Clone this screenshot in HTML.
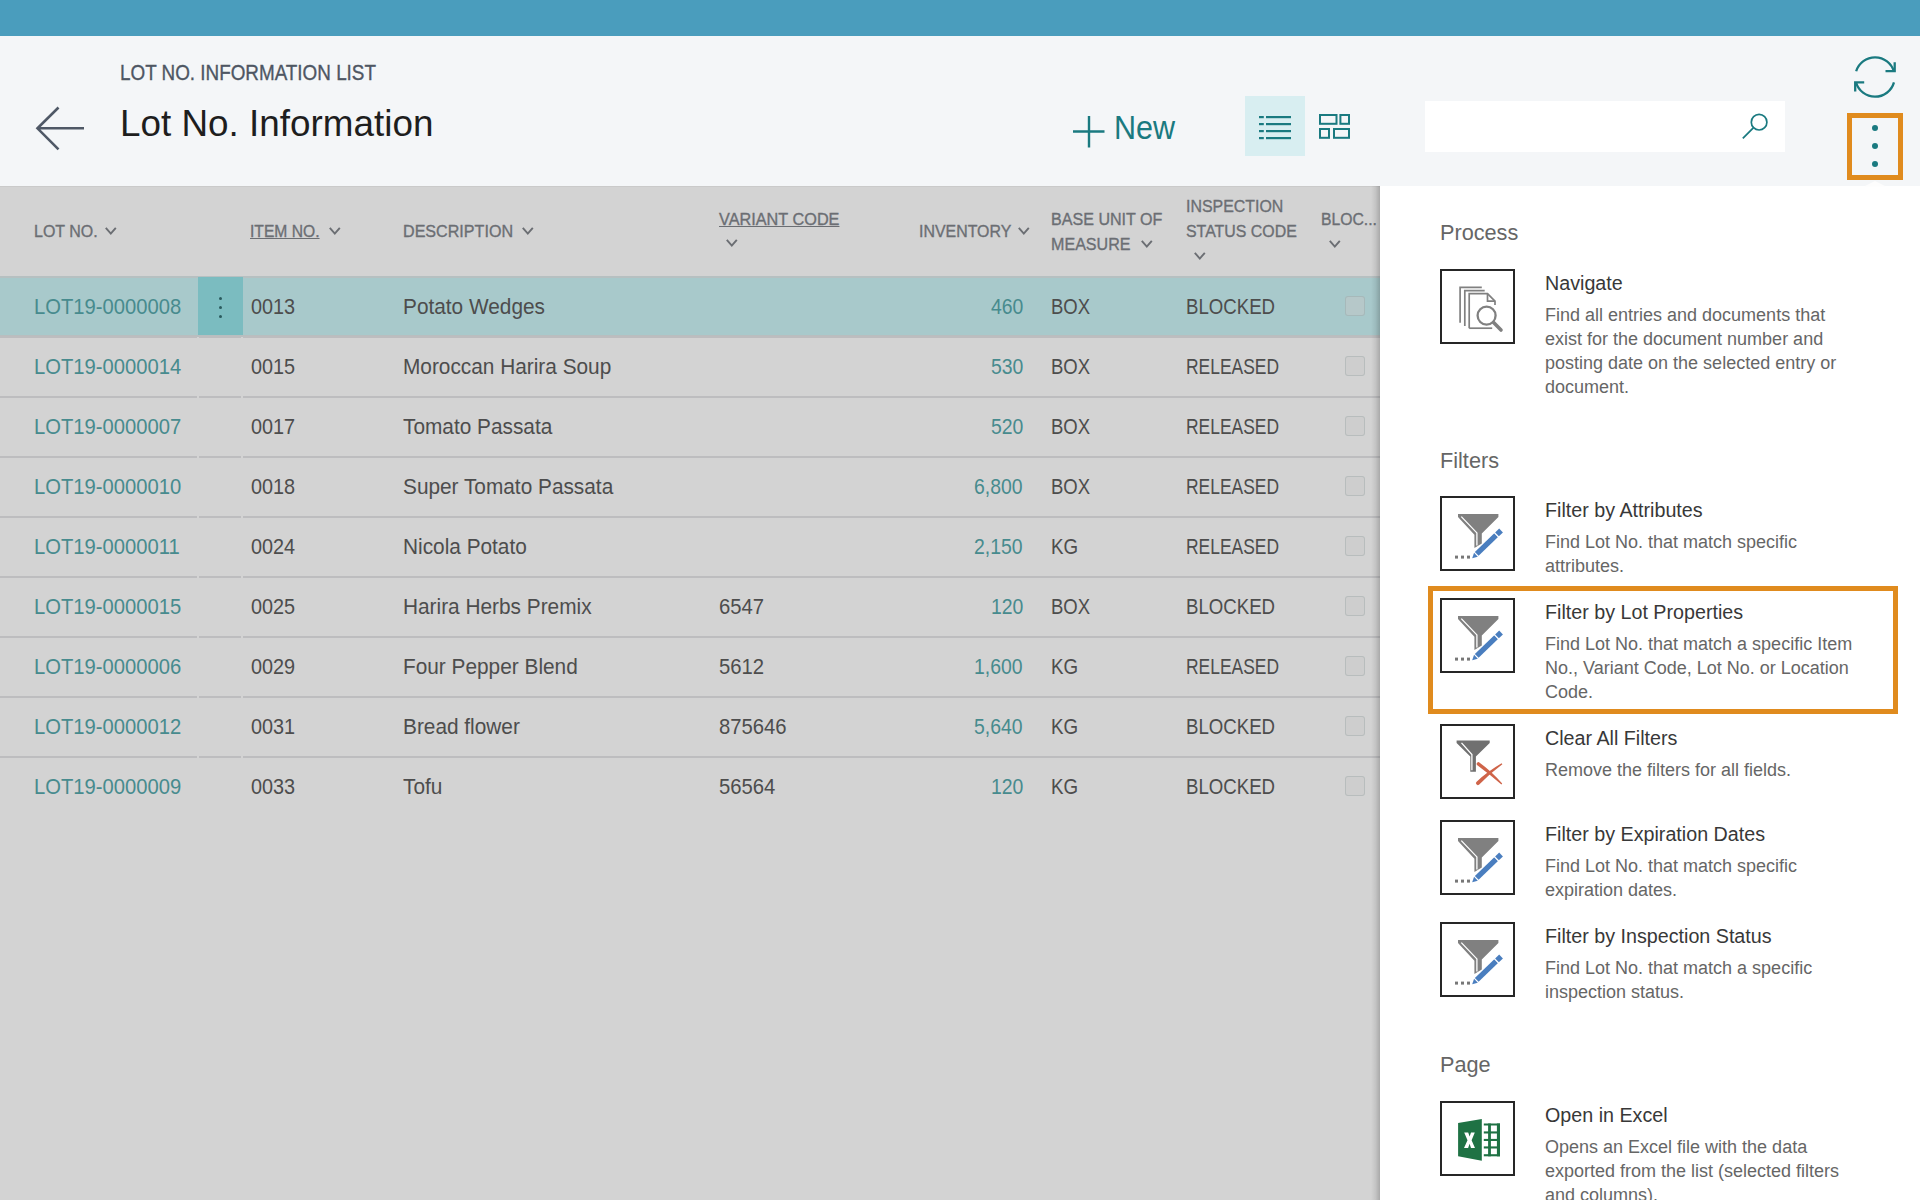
<!DOCTYPE html>
<html><head><meta charset="utf-8">
<style>
*{margin:0;padding:0;box-sizing:border-box}
html,body{width:1920px;height:1200px;overflow:hidden;background:#f4f6f8;font-family:"Liberation Sans",sans-serif}
.t{position:absolute;white-space:nowrap}
.a{position:absolute}
</style></head><body>

<div class="a" style="left:0;top:0;width:1920px;height:36px;background:#4a9dbd"></div>
<div class="t" style="left:120px;top:61.51px;font-size:22px;line-height:22px;color:#4e5663;transform:scaleX(0.857);transform-origin:left top;-webkit-text-stroke:0.35px #4e5663;">LOT NO. INFORMATION LIST</div>
<div class="t" style="left:119.5px;top:104.51px;font-size:37.8px;line-height:37.8px;color:#1e1e1e;transform:scaleX(0.975);transform-origin:left top;">Lot No. Information</div>
<svg class="a" style="left:0;top:0" width="100" height="186"><path d="M37.5 128.3 H84 M58.5 107.5 L37.5 128.3 L58.5 149.3" fill="none" stroke="#4f5866" stroke-width="2.6"/></svg>
<svg class="a" style="left:0;top:0;left:1060px" width="60" height="186"><path d="M29 116 V147.5 M13 131.5 H44.5" fill="none" stroke="#1a7a80" stroke-width="2.4"/></svg>
<div class="t" style="left:1114px;top:110.71px;font-size:33.4px;line-height:33.4px;color:#1a7a80;transform:scaleX(0.915);transform-origin:left top;">New</div>
<div class="a" style="left:1245px;top:96px;width:60px;height:60px;background:#d8eef1"></div>
<svg class="a" style="left:1240px;top:90px" width="120" height="70" viewBox="1240 90 120 70"><g fill="#1a7a80">
<rect x="1259" y="116" width="4.8" height="2.2"/><rect x="1266" y="116" width="25" height="2.2"/>
<rect x="1259" y="123" width="4.8" height="2.2"/><rect x="1266" y="123" width="25" height="2.2"/>
<rect x="1259" y="130" width="4.8" height="2.2"/><rect x="1266" y="130" width="25" height="2.2"/>
<rect x="1259" y="137" width="4.8" height="2.2"/><rect x="1266" y="137" width="25" height="2.2"/>
</g><g fill="none" stroke="#1a7a80" stroke-width="2">
<rect x="1320" y="115" width="16.5" height="8.8"/><rect x="1340.4" y="115" width="8.6" height="8.8"/>
<rect x="1320" y="129" width="9" height="8.8"/><rect x="1334" y="129" width="15" height="8.8"/>
</g></svg>
<div class="a" style="left:1425px;top:101px;width:360px;height:51px;background:#fff"></div>
<svg class="a" style="left:1700px;top:90px" width="100" height="70" viewBox="1700 90 100 70"><circle cx="1759.1" cy="122.2" r="7.8" fill="none" stroke="#1a7a80" stroke-width="1.7"/><path d="M1753.3 127.9 L1742.8 138.4" stroke="#1a7a80" stroke-width="1.8"/></svg>
<svg class="a" style="left:1840px;top:40px" width="70" height="70" viewBox="1840 40 70 70"><g fill="none" stroke="#1a7a80" stroke-width="2.3">
<path d="M1856.16 71.24 A19.7 19.7 0 0 1 1893.98 71.7"/>
<path d="M1893.97 82.33 A19.7 19.7 0 0 1 1856.02 82.27"/>
<path d="M1894.7 62.3 V71.2 H1885.5"/>
<path d="M1855.2 91.6 V82.4 H1864.2"/>
</g></svg>
<div class="a" style="left:1847px;top:113px;width:56px;height:67px;border:5px solid #e08b1e"></div>
<div class="a" style="left:1872px;top:124.9px;width:6px;height:6px;border-radius:50%;background:#1a7a80"></div>
<div class="a" style="left:1872px;top:142.9px;width:6px;height:6px;border-radius:50%;background:#1a7a80"></div>
<div class="a" style="left:1872px;top:160.8px;width:6px;height:6px;border-radius:50%;background:#1a7a80"></div>
<div class="a" style="left:0;top:186px;width:1380px;height:1014px;background:#d3d3d3"></div>
<div class="a" style="left:0;top:186px;width:1380px;height:1px;background:#cacaca"></div>
<div class="t" style="left:34px;top:222.84px;font-size:17.4px;line-height:17.4px;color:#6b6e73;transform:scaleX(0.92);transform-origin:left top;-webkit-text-stroke:0.35px #6b6e73;">LOT NO.</div>
<svg class="a" style="left:103.6px;top:225.8px" width="14" height="10" viewBox="-1 -1 14 10"><path d="M0.8 0.8 L5.8 6.6 L10.8 0.8" fill="none" stroke="#6b6e73" stroke-width="1.9"/></svg>
<div class="t" style="left:250px;top:222.84px;font-size:17.4px;line-height:17.4px;color:#6b6e73;transform:scaleX(0.9);transform-origin:left top;text-decoration:underline;text-underline-offset:1px;text-decoration-thickness:1px;-webkit-text-stroke:0.35px #6b6e73;">ITEM NO.</div>
<svg class="a" style="left:328px;top:225.8px" width="14" height="10" viewBox="-1 -1 14 10"><path d="M0.8 0.8 L5.8 6.6 L10.8 0.8" fill="none" stroke="#6b6e73" stroke-width="1.9"/></svg>
<div class="t" style="left:403px;top:222.84px;font-size:17.4px;line-height:17.4px;color:#6b6e73;transform:scaleX(0.926);transform-origin:left top;-webkit-text-stroke:0.35px #6b6e73;">DESCRIPTION</div>
<svg class="a" style="left:520.7px;top:225.5px" width="14" height="10" viewBox="-1 -1 14 10"><path d="M0.8 0.8 L5.8 6.6 L10.8 0.8" fill="none" stroke="#6b6e73" stroke-width="1.9"/></svg>
<div class="t" style="left:718.5px;top:211.24px;font-size:17.4px;line-height:17.4px;color:#6b6e73;transform:scaleX(0.935);transform-origin:left top;text-decoration:underline;text-underline-offset:1px;text-decoration-thickness:1px;-webkit-text-stroke:0.35px #6b6e73;">VARIANT CODE</div>
<svg class="a" style="left:725px;top:238px" width="14" height="10" viewBox="-1 -1 14 10"><path d="M0.8 0.8 L5.8 6.6 L10.8 0.8" fill="none" stroke="#6b6e73" stroke-width="1.9"/></svg>
<div class="t" style="left:919px;top:223.14px;font-size:17.4px;line-height:17.4px;color:#6b6e73;transform:scaleX(0.915);transform-origin:left top;-webkit-text-stroke:0.35px #6b6e73;">INVENTORY</div>
<svg class="a" style="left:1017px;top:226px" width="14" height="10" viewBox="-1 -1 14 10"><path d="M0.8 0.8 L5.8 6.6 L10.8 0.8" fill="none" stroke="#6b6e73" stroke-width="1.9"/></svg>
<div class="t" style="left:1051px;top:211.14px;font-size:17.4px;line-height:17.4px;color:#6b6e73;transform:scaleX(0.925);transform-origin:left top;-webkit-text-stroke:0.35px #6b6e73;">BASE UNIT OF</div>
<div class="t" style="left:1051px;top:236.14px;font-size:17.4px;line-height:17.4px;color:#6b6e73;transform:scaleX(0.925);transform-origin:left top;-webkit-text-stroke:0.35px #6b6e73;">MEASURE</div>
<svg class="a" style="left:1140px;top:239px" width="14" height="10" viewBox="-1 -1 14 10"><path d="M0.8 0.8 L5.8 6.6 L10.8 0.8" fill="none" stroke="#6b6e73" stroke-width="1.9"/></svg>
<div class="t" style="left:1186px;top:197.84px;font-size:17.4px;line-height:17.4px;color:#6b6e73;transform:scaleX(0.915);transform-origin:left top;-webkit-text-stroke:0.35px #6b6e73;">INSPECTION</div>
<div class="t" style="left:1186px;top:222.84px;font-size:17.4px;line-height:17.4px;color:#6b6e73;transform:scaleX(0.915);transform-origin:left top;-webkit-text-stroke:0.35px #6b6e73;">STATUS CODE</div>
<svg class="a" style="left:1193px;top:250.6px" width="14" height="10" viewBox="-1 -1 14 10"><path d="M0.8 0.8 L5.8 6.6 L10.8 0.8" fill="none" stroke="#6b6e73" stroke-width="1.9"/></svg>
<div class="t" style="left:1321px;top:211.14px;font-size:17.4px;line-height:17.4px;color:#6b6e73;transform:scaleX(0.905);transform-origin:left top;-webkit-text-stroke:0.35px #6b6e73;">BLOC...</div>
<svg class="a" style="left:1328px;top:239px" width="14" height="10" viewBox="-1 -1 14 10"><path d="M0.8 0.8 L5.8 6.6 L10.8 0.8" fill="none" stroke="#6b6e73" stroke-width="1.9"/></svg>
<div class="a" style="left:0;top:276px;width:1380px;height:61px;background:#a8c9cb;border-top:2px solid #b6c0c1;border-bottom:2px solid #b8bebf"></div>
<div class="a" style="left:198px;top:277px;width:45px;height:58px;background:#7bbcc0"></div>
<div class="a" style="left:218.5px;top:296.5px;width:3.2px;height:3.2px;border-radius:50%;background:#2a5a5e"></div>
<div class="a" style="left:218.5px;top:305.5px;width:3.2px;height:3.2px;border-radius:50%;background:#2a5a5e"></div>
<div class="a" style="left:218.5px;top:314.5px;width:3.2px;height:3.2px;border-radius:50%;background:#2a5a5e"></div>
<div class="t" style="left:34px;top:295.54px;font-size:21.8px;line-height:21.8px;color:#478b8e;transform:scaleX(0.927);transform-origin:left top;">LOT19-0000008</div>
<div class="t" style="left:251px;top:295.54px;font-size:21.8px;line-height:21.8px;color:#4d4d4d;transform:scaleX(0.91);transform-origin:left top;">0013</div>
<div class="t" style="left:403px;top:295.54px;font-size:21.8px;line-height:21.8px;color:#4d4d4d;transform:scaleX(0.955);transform-origin:left top;">Potato Wedges</div>
<div class="t" style="right:897px;top:295.54px;font-size:21.8px;line-height:21.8px;color:#478b8e;transform:scaleX(0.89);transform-origin:right top;">460</div>
<div class="t" style="left:1051px;top:295.54px;font-size:21.8px;line-height:21.8px;color:#4d4d4d;transform:scaleX(0.85);transform-origin:left top;">BOX</div>
<div class="t" style="left:1186px;top:295.54px;font-size:21.8px;line-height:21.8px;color:#4d4d4d;transform:scaleX(0.855);transform-origin:left top;">BLOCKED</div>
<div class="a" style="left:1345px;top:296px;width:20px;height:20px;border:1px solid rgba(120,140,140,0.25);border-radius:3px;background:rgba(200,200,200,0.45)"></div>
<div class="a" style="left:0;top:336px;width:197px;height:2px;background:#bdbdbf"></div>
<div class="a" style="left:199px;top:336px;width:42px;height:2px;background:#bdbdbf"></div>
<div class="a" style="left:243px;top:336px;width:1137px;height:2px;background:#bdbdbf"></div>
<div class="t" style="left:34px;top:355.54px;font-size:21.8px;line-height:21.8px;color:#478b8e;transform:scaleX(0.927);transform-origin:left top;">LOT19-0000014</div>
<div class="t" style="left:251px;top:355.54px;font-size:21.8px;line-height:21.8px;color:#4d4d4d;transform:scaleX(0.91);transform-origin:left top;">0015</div>
<div class="t" style="left:403px;top:355.54px;font-size:21.8px;line-height:21.8px;color:#4d4d4d;transform:scaleX(0.955);transform-origin:left top;">Moroccan Harira Soup</div>
<div class="t" style="right:897px;top:355.54px;font-size:21.8px;line-height:21.8px;color:#478b8e;transform:scaleX(0.89);transform-origin:right top;">530</div>
<div class="t" style="left:1051px;top:355.54px;font-size:21.8px;line-height:21.8px;color:#4d4d4d;transform:scaleX(0.85);transform-origin:left top;">BOX</div>
<div class="t" style="left:1186px;top:355.54px;font-size:21.8px;line-height:21.8px;color:#4d4d4d;transform:scaleX(0.8);transform-origin:left top;">RELEASED</div>
<div class="a" style="left:1345px;top:356px;width:20px;height:20px;border:1px solid rgba(120,140,140,0.25);border-radius:3px;background:rgba(200,200,200,0.45)"></div>
<div class="a" style="left:0;top:396px;width:197px;height:2px;background:#bdbdbf"></div>
<div class="a" style="left:199px;top:396px;width:42px;height:2px;background:#bdbdbf"></div>
<div class="a" style="left:243px;top:396px;width:1137px;height:2px;background:#bdbdbf"></div>
<div class="t" style="left:34px;top:415.54px;font-size:21.8px;line-height:21.8px;color:#478b8e;transform:scaleX(0.927);transform-origin:left top;">LOT19-0000007</div>
<div class="t" style="left:251px;top:415.54px;font-size:21.8px;line-height:21.8px;color:#4d4d4d;transform:scaleX(0.91);transform-origin:left top;">0017</div>
<div class="t" style="left:403px;top:415.54px;font-size:21.8px;line-height:21.8px;color:#4d4d4d;transform:scaleX(0.955);transform-origin:left top;">Tomato Passata</div>
<div class="t" style="right:897px;top:415.54px;font-size:21.8px;line-height:21.8px;color:#478b8e;transform:scaleX(0.89);transform-origin:right top;">520</div>
<div class="t" style="left:1051px;top:415.54px;font-size:21.8px;line-height:21.8px;color:#4d4d4d;transform:scaleX(0.85);transform-origin:left top;">BOX</div>
<div class="t" style="left:1186px;top:415.54px;font-size:21.8px;line-height:21.8px;color:#4d4d4d;transform:scaleX(0.8);transform-origin:left top;">RELEASED</div>
<div class="a" style="left:1345px;top:416px;width:20px;height:20px;border:1px solid rgba(120,140,140,0.25);border-radius:3px;background:rgba(200,200,200,0.45)"></div>
<div class="a" style="left:0;top:456px;width:197px;height:2px;background:#bdbdbf"></div>
<div class="a" style="left:199px;top:456px;width:42px;height:2px;background:#bdbdbf"></div>
<div class="a" style="left:243px;top:456px;width:1137px;height:2px;background:#bdbdbf"></div>
<div class="t" style="left:34px;top:475.54px;font-size:21.8px;line-height:21.8px;color:#478b8e;transform:scaleX(0.927);transform-origin:left top;">LOT19-0000010</div>
<div class="t" style="left:251px;top:475.54px;font-size:21.8px;line-height:21.8px;color:#4d4d4d;transform:scaleX(0.91);transform-origin:left top;">0018</div>
<div class="t" style="left:403px;top:475.54px;font-size:21.8px;line-height:21.8px;color:#4d4d4d;transform:scaleX(0.955);transform-origin:left top;">Super Tomato Passata</div>
<div class="t" style="right:897px;top:475.54px;font-size:21.8px;line-height:21.8px;color:#478b8e;transform:scaleX(0.89);transform-origin:right top;">6,800</div>
<div class="t" style="left:1051px;top:475.54px;font-size:21.8px;line-height:21.8px;color:#4d4d4d;transform:scaleX(0.85);transform-origin:left top;">BOX</div>
<div class="t" style="left:1186px;top:475.54px;font-size:21.8px;line-height:21.8px;color:#4d4d4d;transform:scaleX(0.8);transform-origin:left top;">RELEASED</div>
<div class="a" style="left:1345px;top:476px;width:20px;height:20px;border:1px solid rgba(120,140,140,0.25);border-radius:3px;background:rgba(200,200,200,0.45)"></div>
<div class="a" style="left:0;top:516px;width:197px;height:2px;background:#bdbdbf"></div>
<div class="a" style="left:199px;top:516px;width:42px;height:2px;background:#bdbdbf"></div>
<div class="a" style="left:243px;top:516px;width:1137px;height:2px;background:#bdbdbf"></div>
<div class="t" style="left:34px;top:535.54px;font-size:21.8px;line-height:21.8px;color:#478b8e;transform:scaleX(0.927);transform-origin:left top;">LOT19-0000011</div>
<div class="t" style="left:251px;top:535.54px;font-size:21.8px;line-height:21.8px;color:#4d4d4d;transform:scaleX(0.91);transform-origin:left top;">0024</div>
<div class="t" style="left:403px;top:535.54px;font-size:21.8px;line-height:21.8px;color:#4d4d4d;transform:scaleX(0.955);transform-origin:left top;">Nicola Potato</div>
<div class="t" style="right:897px;top:535.54px;font-size:21.8px;line-height:21.8px;color:#478b8e;transform:scaleX(0.89);transform-origin:right top;">2,150</div>
<div class="t" style="left:1051px;top:535.54px;font-size:21.8px;line-height:21.8px;color:#4d4d4d;transform:scaleX(0.86);transform-origin:left top;">KG</div>
<div class="t" style="left:1186px;top:535.54px;font-size:21.8px;line-height:21.8px;color:#4d4d4d;transform:scaleX(0.8);transform-origin:left top;">RELEASED</div>
<div class="a" style="left:1345px;top:536px;width:20px;height:20px;border:1px solid rgba(120,140,140,0.25);border-radius:3px;background:rgba(200,200,200,0.45)"></div>
<div class="a" style="left:0;top:576px;width:197px;height:2px;background:#bdbdbf"></div>
<div class="a" style="left:199px;top:576px;width:42px;height:2px;background:#bdbdbf"></div>
<div class="a" style="left:243px;top:576px;width:1137px;height:2px;background:#bdbdbf"></div>
<div class="t" style="left:34px;top:595.54px;font-size:21.8px;line-height:21.8px;color:#478b8e;transform:scaleX(0.927);transform-origin:left top;">LOT19-0000015</div>
<div class="t" style="left:251px;top:595.54px;font-size:21.8px;line-height:21.8px;color:#4d4d4d;transform:scaleX(0.91);transform-origin:left top;">0025</div>
<div class="t" style="left:403px;top:595.54px;font-size:21.8px;line-height:21.8px;color:#4d4d4d;transform:scaleX(0.955);transform-origin:left top;">Harira Herbs Premix</div>
<div class="t" style="left:718.5px;top:595.54px;font-size:21.8px;line-height:21.8px;color:#4d4d4d;transform:scaleX(0.93);transform-origin:left top;">6547</div>
<div class="t" style="right:897px;top:595.54px;font-size:21.8px;line-height:21.8px;color:#478b8e;transform:scaleX(0.89);transform-origin:right top;">120</div>
<div class="t" style="left:1051px;top:595.54px;font-size:21.8px;line-height:21.8px;color:#4d4d4d;transform:scaleX(0.85);transform-origin:left top;">BOX</div>
<div class="t" style="left:1186px;top:595.54px;font-size:21.8px;line-height:21.8px;color:#4d4d4d;transform:scaleX(0.855);transform-origin:left top;">BLOCKED</div>
<div class="a" style="left:1345px;top:596px;width:20px;height:20px;border:1px solid rgba(120,140,140,0.25);border-radius:3px;background:rgba(200,200,200,0.45)"></div>
<div class="a" style="left:0;top:636px;width:197px;height:2px;background:#bdbdbf"></div>
<div class="a" style="left:199px;top:636px;width:42px;height:2px;background:#bdbdbf"></div>
<div class="a" style="left:243px;top:636px;width:1137px;height:2px;background:#bdbdbf"></div>
<div class="t" style="left:34px;top:655.54px;font-size:21.8px;line-height:21.8px;color:#478b8e;transform:scaleX(0.927);transform-origin:left top;">LOT19-0000006</div>
<div class="t" style="left:251px;top:655.54px;font-size:21.8px;line-height:21.8px;color:#4d4d4d;transform:scaleX(0.91);transform-origin:left top;">0029</div>
<div class="t" style="left:403px;top:655.54px;font-size:21.8px;line-height:21.8px;color:#4d4d4d;transform:scaleX(0.955);transform-origin:left top;">Four Pepper Blend</div>
<div class="t" style="left:718.5px;top:655.54px;font-size:21.8px;line-height:21.8px;color:#4d4d4d;transform:scaleX(0.93);transform-origin:left top;">5612</div>
<div class="t" style="right:897px;top:655.54px;font-size:21.8px;line-height:21.8px;color:#478b8e;transform:scaleX(0.89);transform-origin:right top;">1,600</div>
<div class="t" style="left:1051px;top:655.54px;font-size:21.8px;line-height:21.8px;color:#4d4d4d;transform:scaleX(0.86);transform-origin:left top;">KG</div>
<div class="t" style="left:1186px;top:655.54px;font-size:21.8px;line-height:21.8px;color:#4d4d4d;transform:scaleX(0.8);transform-origin:left top;">RELEASED</div>
<div class="a" style="left:1345px;top:656px;width:20px;height:20px;border:1px solid rgba(120,140,140,0.25);border-radius:3px;background:rgba(200,200,200,0.45)"></div>
<div class="a" style="left:0;top:696px;width:197px;height:2px;background:#bdbdbf"></div>
<div class="a" style="left:199px;top:696px;width:42px;height:2px;background:#bdbdbf"></div>
<div class="a" style="left:243px;top:696px;width:1137px;height:2px;background:#bdbdbf"></div>
<div class="t" style="left:34px;top:715.54px;font-size:21.8px;line-height:21.8px;color:#478b8e;transform:scaleX(0.927);transform-origin:left top;">LOT19-0000012</div>
<div class="t" style="left:251px;top:715.54px;font-size:21.8px;line-height:21.8px;color:#4d4d4d;transform:scaleX(0.91);transform-origin:left top;">0031</div>
<div class="t" style="left:403px;top:715.54px;font-size:21.8px;line-height:21.8px;color:#4d4d4d;transform:scaleX(0.955);transform-origin:left top;">Bread flower</div>
<div class="t" style="left:718.5px;top:715.54px;font-size:21.8px;line-height:21.8px;color:#4d4d4d;transform:scaleX(0.93);transform-origin:left top;">875646</div>
<div class="t" style="right:897px;top:715.54px;font-size:21.8px;line-height:21.8px;color:#478b8e;transform:scaleX(0.89);transform-origin:right top;">5,640</div>
<div class="t" style="left:1051px;top:715.54px;font-size:21.8px;line-height:21.8px;color:#4d4d4d;transform:scaleX(0.86);transform-origin:left top;">KG</div>
<div class="t" style="left:1186px;top:715.54px;font-size:21.8px;line-height:21.8px;color:#4d4d4d;transform:scaleX(0.855);transform-origin:left top;">BLOCKED</div>
<div class="a" style="left:1345px;top:716px;width:20px;height:20px;border:1px solid rgba(120,140,140,0.25);border-radius:3px;background:rgba(200,200,200,0.45)"></div>
<div class="a" style="left:0;top:756px;width:197px;height:2px;background:#bdbdbf"></div>
<div class="a" style="left:199px;top:756px;width:42px;height:2px;background:#bdbdbf"></div>
<div class="a" style="left:243px;top:756px;width:1137px;height:2px;background:#bdbdbf"></div>
<div class="t" style="left:34px;top:775.54px;font-size:21.8px;line-height:21.8px;color:#478b8e;transform:scaleX(0.927);transform-origin:left top;">LOT19-0000009</div>
<div class="t" style="left:251px;top:775.54px;font-size:21.8px;line-height:21.8px;color:#4d4d4d;transform:scaleX(0.91);transform-origin:left top;">0033</div>
<div class="t" style="left:403px;top:775.54px;font-size:21.8px;line-height:21.8px;color:#4d4d4d;transform:scaleX(0.955);transform-origin:left top;">Tofu</div>
<div class="t" style="left:718.5px;top:775.54px;font-size:21.8px;line-height:21.8px;color:#4d4d4d;transform:scaleX(0.93);transform-origin:left top;">56564</div>
<div class="t" style="right:897px;top:775.54px;font-size:21.8px;line-height:21.8px;color:#478b8e;transform:scaleX(0.89);transform-origin:right top;">120</div>
<div class="t" style="left:1051px;top:775.54px;font-size:21.8px;line-height:21.8px;color:#4d4d4d;transform:scaleX(0.86);transform-origin:left top;">KG</div>
<div class="t" style="left:1186px;top:775.54px;font-size:21.8px;line-height:21.8px;color:#4d4d4d;transform:scaleX(0.855);transform-origin:left top;">BLOCKED</div>
<div class="a" style="left:1345px;top:776px;width:20px;height:20px;border:1px solid rgba(120,140,140,0.25);border-radius:3px;background:rgba(200,200,200,0.45)"></div>
<div class="a" style="left:1371px;top:186px;width:9px;height:1014px;background:linear-gradient(to right,rgba(0,0,0,0),rgba(0,0,0,0.07) 50%,rgba(0,0,0,0.2))"></div>
<div class="a" style="left:1380px;top:186px;width:540px;height:1014px;background:#fff"></div>
<svg class="a" style="left:1864px;top:180px" width="22" height="7"><path d="M0 6.5 L11 1 L22 6.5 Z" fill="#fdfdfd"/></svg>
<div class="t" style="left:1440px;top:222.31px;font-size:22px;line-height:22px;color:#666666;transform:scaleX(0.985);transform-origin:left top;">Process</div>
<svg class="a" style="left:1440px;top:269px" width="75" height="75" viewBox="0 0 75 75"><rect x="1" y="1" width="73" height="73" fill="#fff" stroke="#262626" stroke-width="2"/><g fill="none" stroke="#808080" stroke-width="1.7">
<path d="M20.1 53.8 V18.4 H41.8"/><path d="M24.8 56.9 V21.7 H44.7"/>
<path d="M29.2 59.2 V24.7 H47.5 L55 32.2 V36"/><path d="M47.5 24.7 V32.2 H55"/><path d="M29.2 59.2 H52.2"/>
</g><circle cx="46.6" cy="46.6" r="9" fill="#fff" stroke="#808080" stroke-width="2.3"/>
<path d="M53.6 53.6 L61 61" stroke="#808080" stroke-width="3.6" stroke-linecap="round"/></svg>
<div class="t" style="left:1545px;top:273.71px;font-size:19.5px;line-height:19.5px;color:#383838;transform:scaleX(1.01);transform-origin:left top;">Navigate</div>
<div class="t" style="left:1545px;top:305.75px;font-size:18px;line-height:18px;color:#666666;">Find all entries and documents that</div>
<div class="t" style="left:1545px;top:329.75px;font-size:18px;line-height:18px;color:#666666;">exist for the document number and</div>
<div class="t" style="left:1545px;top:353.75px;font-size:18px;line-height:18px;color:#666666;">posting date on the selected entry or</div>
<div class="t" style="left:1545px;top:377.75px;font-size:18px;line-height:18px;color:#666666;">document.</div>
<div class="t" style="left:1440px;top:450.31px;font-size:22px;line-height:22px;color:#666666;transform:scaleX(0.985);transform-origin:left top;">Filters</div>
<svg class="a" style="left:1440px;top:496px" width="75" height="75" viewBox="0 0 75 75"><rect x="1" y="1" width="73" height="73" fill="#fff" stroke="#262626" stroke-width="2"/><path d="M18 18 H58.4 V21 L41.8 37.5 V47.5 L34.4 52 V38.8 L18 21 Z" fill="#808080"/>
<path d="M21.3 20.6 L36.9 36.9 V49.4" fill="none" stroke="#fff" stroke-width="1.3"/>
<g transform="translate(32.2,62.3) rotate(-44)">
<path d="M-1.5 -3.6 H7.2 V3.6 H-1.5 Z" fill="#fff"/>
<path d="M0 0 L5.2 -2.7 V2.7 Z" fill="#4a7ebf"/>
<rect x="6.3" y="-2.7" width="27" height="5.4" fill="#4a7ebf"/>
<rect x="33.3" y="-3.2" width="1.2" height="6.4" fill="#fff"/>
<rect x="34.5" y="-2.7" width="5.6" height="5.4" fill="#4a7ebf"/>
</g>
<rect x="15" y="59.6" width="3" height="3" fill="#777"/><rect x="21" y="59.6" width="3" height="3" fill="#777"/><rect x="27" y="59.6" width="3" height="3" fill="#777"/></svg>
<div class="t" style="left:1545px;top:500.71px;font-size:19.5px;line-height:19.5px;color:#383838;transform:scaleX(1.01);transform-origin:left top;">Filter by Attributes</div>
<div class="t" style="left:1545px;top:532.75px;font-size:18px;line-height:18px;color:#666666;">Find Lot No. that match specific</div>
<div class="t" style="left:1545px;top:556.75px;font-size:18px;line-height:18px;color:#666666;">attributes.</div>
<svg class="a" style="left:1440px;top:598px" width="75" height="75" viewBox="0 0 75 75"><rect x="1" y="1" width="73" height="73" fill="#fff" stroke="#262626" stroke-width="2"/><path d="M18 18 H58.4 V21 L41.8 37.5 V47.5 L34.4 52 V38.8 L18 21 Z" fill="#808080"/>
<path d="M21.3 20.6 L36.9 36.9 V49.4" fill="none" stroke="#fff" stroke-width="1.3"/>
<g transform="translate(32.2,62.3) rotate(-44)">
<path d="M-1.5 -3.6 H7.2 V3.6 H-1.5 Z" fill="#fff"/>
<path d="M0 0 L5.2 -2.7 V2.7 Z" fill="#4a7ebf"/>
<rect x="6.3" y="-2.7" width="27" height="5.4" fill="#4a7ebf"/>
<rect x="33.3" y="-3.2" width="1.2" height="6.4" fill="#fff"/>
<rect x="34.5" y="-2.7" width="5.6" height="5.4" fill="#4a7ebf"/>
</g>
<rect x="15" y="59.6" width="3" height="3" fill="#777"/><rect x="21" y="59.6" width="3" height="3" fill="#777"/><rect x="27" y="59.6" width="3" height="3" fill="#777"/></svg>
<div class="t" style="left:1545px;top:602.71px;font-size:19.5px;line-height:19.5px;color:#383838;transform:scaleX(1.01);transform-origin:left top;">Filter by Lot Properties</div>
<div class="t" style="left:1545px;top:634.75px;font-size:18px;line-height:18px;color:#666666;">Find Lot No. that match a specific Item</div>
<div class="t" style="left:1545px;top:658.75px;font-size:18px;line-height:18px;color:#666666;">No., Variant Code, Lot No. or Location</div>
<div class="t" style="left:1545px;top:682.75px;font-size:18px;line-height:18px;color:#666666;">Code.</div>
<div class="a" style="left:1428px;top:586px;width:470px;height:128px;border:5px solid #e08b1e"></div>
<svg class="a" style="left:1440px;top:724px" width="75" height="75" viewBox="0 0 75 75"><rect x="1" y="1" width="73" height="73" fill="#fff" stroke="#262626" stroke-width="2"/><path d="M16.6 16.6 H49.7 V18.9 L35.9 32.5 V47.8 H30.3 V32.5 L16.6 18.9 Z" fill="#707070"/>
<path d="M21.5 18.9 L31.9 30.6 V46.3" fill="none" stroke="#fff" stroke-width="1.3"/>
<path d="M39.67 38.63 Q52.1 47.6 62.19 59.54 L61.41 60.46 Q49.7 50.6 37.33 41.37 A1.8 1.8 0 0 1 39.67 38.63 Z" fill="#cf6449"/>
<path d="M38.99 60.68 Q49.9 49.5 62.38 40.27 L61.62 39.33 Q48 47.2 36.61 57.72 A1.9 1.9 0 0 0 38.99 60.68 Z" fill="#cf6449"/></svg>
<div class="t" style="left:1545px;top:728.71px;font-size:19.5px;line-height:19.5px;color:#383838;transform:scaleX(1.01);transform-origin:left top;">Clear All Filters</div>
<div class="t" style="left:1545px;top:760.75px;font-size:18px;line-height:18px;color:#666666;">Remove the filters for all fields.</div>
<svg class="a" style="left:1440px;top:820px" width="75" height="75" viewBox="0 0 75 75"><rect x="1" y="1" width="73" height="73" fill="#fff" stroke="#262626" stroke-width="2"/><path d="M18 18 H58.4 V21 L41.8 37.5 V47.5 L34.4 52 V38.8 L18 21 Z" fill="#808080"/>
<path d="M21.3 20.6 L36.9 36.9 V49.4" fill="none" stroke="#fff" stroke-width="1.3"/>
<g transform="translate(32.2,62.3) rotate(-44)">
<path d="M-1.5 -3.6 H7.2 V3.6 H-1.5 Z" fill="#fff"/>
<path d="M0 0 L5.2 -2.7 V2.7 Z" fill="#4a7ebf"/>
<rect x="6.3" y="-2.7" width="27" height="5.4" fill="#4a7ebf"/>
<rect x="33.3" y="-3.2" width="1.2" height="6.4" fill="#fff"/>
<rect x="34.5" y="-2.7" width="5.6" height="5.4" fill="#4a7ebf"/>
</g>
<rect x="15" y="59.6" width="3" height="3" fill="#777"/><rect x="21" y="59.6" width="3" height="3" fill="#777"/><rect x="27" y="59.6" width="3" height="3" fill="#777"/></svg>
<div class="t" style="left:1545px;top:824.71px;font-size:19.5px;line-height:19.5px;color:#383838;transform:scaleX(1.01);transform-origin:left top;">Filter by Expiration Dates</div>
<div class="t" style="left:1545px;top:856.75px;font-size:18px;line-height:18px;color:#666666;">Find Lot No. that match specific</div>
<div class="t" style="left:1545px;top:880.75px;font-size:18px;line-height:18px;color:#666666;">expiration dates.</div>
<svg class="a" style="left:1440px;top:922px" width="75" height="75" viewBox="0 0 75 75"><rect x="1" y="1" width="73" height="73" fill="#fff" stroke="#262626" stroke-width="2"/><path d="M18 18 H58.4 V21 L41.8 37.5 V47.5 L34.4 52 V38.8 L18 21 Z" fill="#808080"/>
<path d="M21.3 20.6 L36.9 36.9 V49.4" fill="none" stroke="#fff" stroke-width="1.3"/>
<g transform="translate(32.2,62.3) rotate(-44)">
<path d="M-1.5 -3.6 H7.2 V3.6 H-1.5 Z" fill="#fff"/>
<path d="M0 0 L5.2 -2.7 V2.7 Z" fill="#4a7ebf"/>
<rect x="6.3" y="-2.7" width="27" height="5.4" fill="#4a7ebf"/>
<rect x="33.3" y="-3.2" width="1.2" height="6.4" fill="#fff"/>
<rect x="34.5" y="-2.7" width="5.6" height="5.4" fill="#4a7ebf"/>
</g>
<rect x="15" y="59.6" width="3" height="3" fill="#777"/><rect x="21" y="59.6" width="3" height="3" fill="#777"/><rect x="27" y="59.6" width="3" height="3" fill="#777"/></svg>
<div class="t" style="left:1545px;top:926.71px;font-size:19.5px;line-height:19.5px;color:#383838;transform:scaleX(1.01);transform-origin:left top;">Filter by Inspection Status</div>
<div class="t" style="left:1545px;top:958.75px;font-size:18px;line-height:18px;color:#666666;">Find Lot No. that match a specific</div>
<div class="t" style="left:1545px;top:982.75px;font-size:18px;line-height:18px;color:#666666;">inspection status.</div>
<div class="t" style="left:1440px;top:1054.31px;font-size:22px;line-height:22px;color:#666666;transform:scaleX(0.985);transform-origin:left top;">Page</div>
<svg class="a" style="left:1440px;top:1101px" width="75" height="75" viewBox="0 0 75 75"><rect x="1" y="1" width="73" height="73" fill="#fff" stroke="#262626" stroke-width="2"/><path d="M18.1 21.9 L41.8 18.1 V59.7 L18.1 55.3 Z" fill="#1f7244"/>
<path d="M24.2 31.6 H28.2 L29.6 35.6 L31 31.6 H34.8 L31.6 39.2 L35 46.9 H31 L29.6 42.8 L28.1 46.9 H24 L27.5 39.2 Z" fill="#fff"/>
<g fill="#1f7244"><rect x="43.8" y="22.5" width="16.2" height="2"/><rect x="43.8" y="30.4" width="16.2" height="2.1"/>
<rect x="43.8" y="37.9" width="16.2" height="2.1"/><rect x="43.8" y="45.4" width="16.2" height="2.1"/><rect x="43.8" y="53.2" width="16.2" height="2.1"/>
<rect x="48.1" y="22.5" width="2.8" height="32.8"/><rect x="56.9" y="22.5" width="3.1" height="32.8"/></g></svg>
<div class="t" style="left:1545px;top:1105.71px;font-size:19.5px;line-height:19.5px;color:#383838;transform:scaleX(1.01);transform-origin:left top;">Open in Excel</div>
<div class="t" style="left:1545px;top:1137.75px;font-size:18px;line-height:18px;color:#666666;">Opens an Excel file with the data</div>
<div class="t" style="left:1545px;top:1161.75px;font-size:18px;line-height:18px;color:#666666;">exported from the list (selected filters</div>
<div class="t" style="left:1545px;top:1185.75px;font-size:18px;line-height:18px;color:#666666;">and columns).</div>
</body></html>
